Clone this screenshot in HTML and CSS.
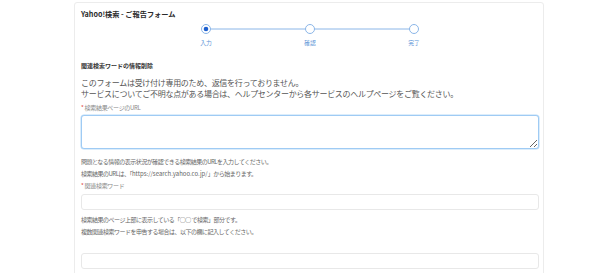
FILE: index.html
```html
<!DOCTYPE html>
<html lang="ja">
<head>
<meta charset="utf-8">
<link rel="stylesheet" href="styles.css">
</head>
<body>
<div class="card">
  <h1 class="title">Yahoo!検索 - ご報告フォーム</h1>
  <div class="stepper">
    <svg class="track" width="218" height="12" viewBox="0 0 218 12">
      <line x1="5" y1="6" x2="213" y2="6" stroke="#8bb6e8" stroke-width="1"/>
      <circle cx="5" cy="6" r="4.5" fill="#fff" stroke="#8bb6e8" stroke-width="1"/>
      <circle cx="5" cy="6" r="2.3" fill="#1d5fce"/>
      <circle cx="109" cy="6" r="4.5" fill="#fff" stroke="#8bb6e8" stroke-width="1"/>
      <circle cx="213" cy="6" r="4.5" fill="#fff" stroke="#8bb6e8" stroke-width="1"/>
    </svg>
    <div class="steps">
      <span class="step">入力</span>
      <span class="step">確認</span>
      <span class="step">完了</span>
    </div>
  </div>
  <h2 class="section">関連検索ワードの情報削除</h2>
  <p class="lead">このフォームは受け付け専用のため、返信を行っておりません。<br>サービスについてご不明な点がある場合は、ヘルプセンターから各サービスのヘルプページをご覧ください。</p>
  <label class="label label-first"><span class="req">*</span> 検索結果ページのURL</label>
  <textarea class="area"></textarea>
  <p class="help help-first">問題となる情報の表示状況が確認できる検索結果のURLを入力してください。<br>検索結果のURLは、「<span class="latin">https://search.yahoo.co.jp/</span>」から始まります。</p>
  <label class="label label-second"><span class="req">*</span> 関連検索ワード</label>
  <input class="field" type="text">
  <p class="help help-second">検索結果のページ上部に表示している「○○ で検索」部分です。<br>複数関連検索ワードを申告する場合は、以下の欄に記入してください。</p>
  <input class="field field-last" type="text">
</div>
</body>
</html>
```

FILE: styles.css
```css
html, body {
  margin: 0;
  padding: 0;
  background: #fff;
}
body {
  font-family: "Noto Sans CJK JP", "Noto Sans", sans-serif;
  color: #333;
}
.card {
  margin: 2px 0 0 74px;
  width: 458px;
  padding: 5px 4px 20px 6px;
  border: 1px solid #ececec;
  border-radius: 3px;
  box-sizing: content-box;
}
.title {
  margin: 0;
  font-size: 7.2px;
  line-height: 12px;
  font-weight: 700;
  color: #2b2b2b;
}
.stepper {
  display: flex;
  flex-direction: column;
  align-items: center;
  margin-top: 3px;
}
.track {
  display: block;
}
.steps {
  width: 228px;
  display: flex;
  justify-content: space-between;
  margin-top: 4px;
}
.step {
  width: 20px;
  text-align: center;
  font-size: 5.8px;
  line-height: 8px;
  color: #5b93d6;
}
.section {
  margin: 15px 0 0;
  font-size: 6px;
  line-height: 8px;
  font-weight: 700;
  color: #333;
}
.lead {
  margin: 7px 0 0;
  font-size: 8px;
  letter-spacing: -0.3px;
  line-height: 11px;
  color: #555;
}
.label {
  display: block;
  font-size: 6px;
  letter-spacing: -0.3px;
  line-height: 8px;
  color: #888;
}
.label-first {
  margin-top: 5px;
}
.label-second {
  margin-top: 2px;
}
.req {
  color: #e2463c;
}
.area {
  display: block;
  box-sizing: border-box;
  width: 100%;
  height: 34px;
  margin-top: 3px;
  border: 1px solid #9fcbf4;
  border-radius: 3px;
  padding: 0;
  outline: none;
  resize: vertical;
  box-shadow: 0 0 0 0.5px #b9dbf8;
}
.help {
  margin: 0;
  font-size: 6px;
  letter-spacing: -0.5px;
  line-height: 12px;
  color: #666;
}
.latin {
  letter-spacing: 0;
}
.help-first {
  margin-top: 7px;
}
.help-second {
  margin-top: 4px;
}
.field {
  display: block;
  box-sizing: border-box;
  width: 100%;
  height: 16px;
  margin-top: 4px;
  border: 1px solid #e8e8e8;
  border-radius: 3px;
  padding: 0;
  outline: none;
}
.field-last {
  margin-top: 15px;
}
```
